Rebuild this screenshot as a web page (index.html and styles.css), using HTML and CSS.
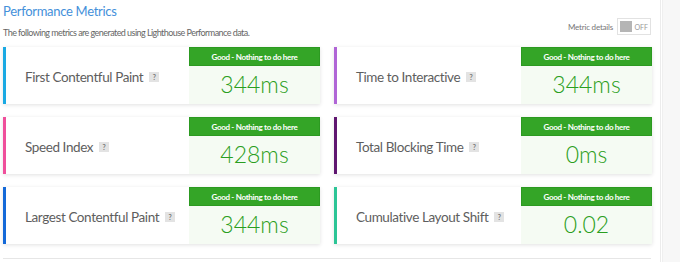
FILE: index.html
```html
<!DOCTYPE html>
<html>
<head>
<meta charset="utf-8">
<link rel="stylesheet" href="styles.css">
</head>
<body>
<div class="page">
  <main class="main">
    <header class="head">
      <div class="titles">
        <h2 class="title">Performance Metrics</h2>
        <p class="sub">The following metrics are generated using Lighthouse Performance data.</p>
      </div>
      <div class="toggle-wrap">
        <span class="toggle-label">Metric details</span>
        <span class="toggle"><span class="knob"></span><span class="off">OFF</span></span>
      </div>
    </header>
    <section class="grid">
      <div class="card c-blue">
        <div class="label">First Contentful Paint <span class="q">?</span></div>
        <div class="score"><div class="grade">Good - Nothing to do here</div><div class="value">344ms</div></div>
      </div>
      <div class="card c-purple">
        <div class="label">Time to Interactive <span class="q">?</span></div>
        <div class="score"><div class="grade">Good - Nothing to do here</div><div class="value">344ms</div></div>
      </div>
      <div class="card c-pink">
        <div class="label">Speed Index <span class="q">?</span></div>
        <div class="score"><div class="grade">Good - Nothing to do here</div><div class="value">428ms</div></div>
      </div>
      <div class="card c-dpurple">
        <div class="label">Total Blocking Time <span class="q">?</span></div>
        <div class="score"><div class="grade">Good - Nothing to do here</div><div class="value">0ms</div></div>
      </div>
      <div class="card c-dblue">
        <div class="label">Largest Contentful Paint <span class="q">?</span></div>
        <div class="score"><div class="grade">Good - Nothing to do here</div><div class="value">344ms</div></div>
      </div>
      <div class="card c-teal">
        <div class="label">Cumulative Layout Shift <span class="q">?</span></div>
        <div class="score"><div class="grade">Good - Nothing to do here</div><div class="value">0.02</div></div>
      </div>
    </section>
    <div class="rule"></div>
  </main>
  <aside class="side"></aside>
</div>
</body>
</html>
```

FILE: styles.css
```css
* { box-sizing: border-box; }
html, body { margin: 0; padding: 0; background: #fff; }
body { font-family: Lato, "Liberation Sans", sans-serif; color: #555; }
.page { display: flex; width: 680px; height: 262px; overflow: hidden; }
.main { width: 661px; padding: 0 9px 0 3px; border-right: 1px solid #ececec; }
.side { flex: 1; background: #f7f7f7; border-left: 1px solid #efefef; margin-left: 1px; }
.head { display: flex; justify-content: space-between; align-items: flex-start; height: 47px; }
.titles { padding-top: 3px; }
.title { margin: 0; font-weight: 400; font-size: 13px; line-height: 17px; color: #4490da; letter-spacing: -0.3px; }
.sub { margin: 7px 0 0; font-size: 9px; line-height: 12px; color: #666; letter-spacing: -0.55px; }
.toggle-wrap { display: flex; align-items: center; gap: 4px; margin-top: 18px; }
.toggle-label { font-size: 8px; color: #777; letter-spacing: -0.2px; }
.toggle { display: flex; align-items: center; width: 34px; height: 17px; border: 1px solid #e2e2e2; padding: 2px; gap: 2px; }
.knob { width: 14px; height: 11px; background: #b5b5b5; }
.off { font-size: 7px; color: #999; }
.grid { display: grid; grid-template-columns: 317px 318px; column-gap: 14px; row-gap: 13px; }
.card { display: flex; justify-content: space-between; height: 57px; background: #fff; border-left: 3px solid #1aa9e3; box-shadow: 0 1px 4px rgba(0,0,0,0.12); }
.c-purple { border-left-color: #b065d6; }
.c-pink { border-left-color: #ef4f9b; }
.c-dpurple { border-left-color: #5f1670; }
.c-dblue { border-left-color: #1469d8; }
.c-teal { border-left-color: #2cc596; }
.label { align-self: center; padding-left: 19px; padding-top: 3px; font-size: 13.5px; letter-spacing: -0.4px; white-space: nowrap; color: #5e5e5e; display: flex; align-items: center; gap: 6px; }
.q { display: inline-flex; align-items: center; justify-content: center; width: 10px; height: 10px; background: #e3e3e3; color: #777; font-size: 7px; font-weight: 700; letter-spacing: 0; }
.score { width: 131px; flex: none; background: #f5fbf3; display: flex; flex-direction: column; }
.grade { height: 19px; background: #34a527; border: 1px solid #2c9a21; color: #fff; font-size: 8px; font-weight: 700; letter-spacing: -0.3px; display: flex; align-items: center; justify-content: center; }
.value { flex: 1; display: flex; align-items: center; justify-content: center; font-size: 23px; font-weight: 300; color: #2a9e20; padding-bottom: 2px; }
.rule { height: 1px; background: #e6e6e6; margin-top: 14px; }
```
